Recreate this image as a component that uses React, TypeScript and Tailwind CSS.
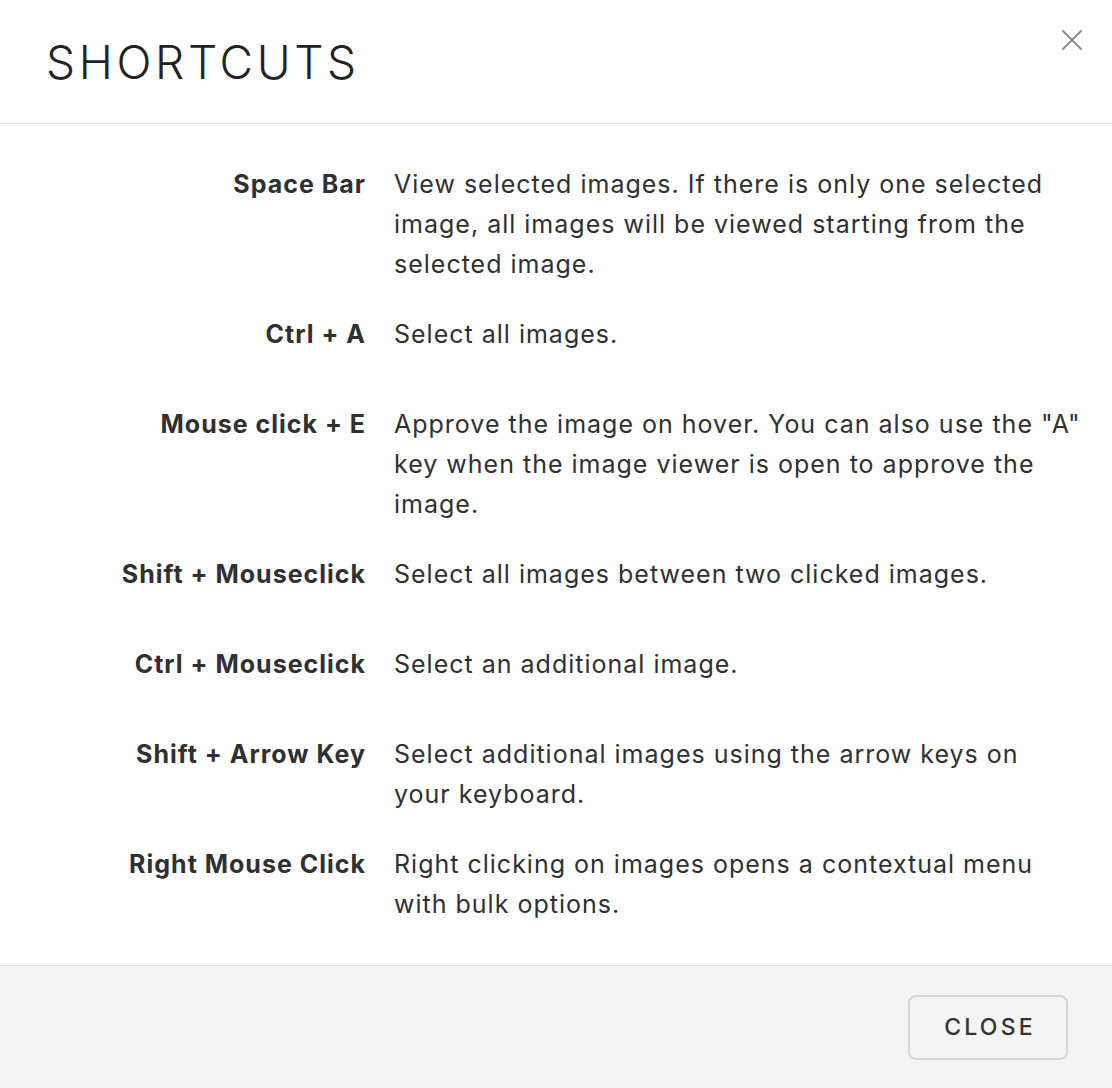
import React from 'react'

type Shortcut = {
  keys: string
  description: string
}

const shortcuts: Shortcut[] = [
  {
    keys: 'Space Bar',
    description:
      'View selected images. If there is only one selected image, all images will be viewed starting from the selected image.',
  },
  { keys: 'Ctrl + A', description: 'Select all images.' },
  {
    keys: 'Mouse click + E',
    description:
      'Approve the image on hover. You can also use the "A" key when the image viewer is open to approve the image.',
  },
  {
    keys: 'Shift + Mouseclick',
    description: 'Select all images between two clicked images.',
  },
  { keys: 'Ctrl + Mouseclick', description: 'Select an additional image.' },
  {
    keys: 'Shift + Arrow Key',
    description:
      'Select additional images using the arrow keys on your keyboard.',
  },
  {
    keys: 'Right Mouse Click',
    description:
      'Right clicking on images opens a contextual menu with bulk options.',
  },
]

const CloseIcon = () => (
  <svg width="20" height="20" viewBox="0 0 20 20" fill="none">
    <path
      d="M1 1L19 19M19 1L1 19"
      stroke="#8a8a8a"
      strokeWidth="1.8"
      strokeLinecap="round"
    />
  </svg>
)

export default function App() {
  return (
    <div
      className="flex h-screen w-full flex-col bg-white text-[#303030]"
      style={{ fontFamily: 'Inter, "Noto Sans", sans-serif' }}
    >
      {/* header */}
      <div className="relative flex h-[124px] shrink-0 items-center border-b border-[#e6e6e6] px-[46px]">
        <h2 className="text-[46px] font-light leading-none tracking-[0.08em] text-[#222]">
          SHORTCUTS
        </h2>
        <button className="absolute right-[30px] top-[30px]">
          <CloseIcon />
        </button>
      </div>

      {/* body */}
      <div className="flex flex-1 flex-col gap-[30px] pl-12 pt-10">
        {shortcuts.map((s) => (
          <div key={s.keys} className="flex min-h-[60px] gap-7">
            <span className="w-[318px] shrink-0 text-right text-[25px] font-bold leading-[40px] tracking-[1px]">
              {s.keys}
            </span>
            <span className="w-[687px] text-[25px] leading-[40px] tracking-[1px]">
              {s.description}
            </span>
          </div>
        ))}
      </div>

      {/* footer */}
      <div className="flex h-[123px] shrink-0 items-center justify-end border-t border-[#dcdcdc] bg-[#f4f4f4] pr-11">
        <button className="flex h-[65px] w-[160px] items-center justify-center rounded-lg border-2 border-[#d6d6d6] pl-1 text-[23px] font-medium tracking-[0.14em] text-[#333]">
          CLOSE
        </button>
      </div>
    </div>
  )
}
